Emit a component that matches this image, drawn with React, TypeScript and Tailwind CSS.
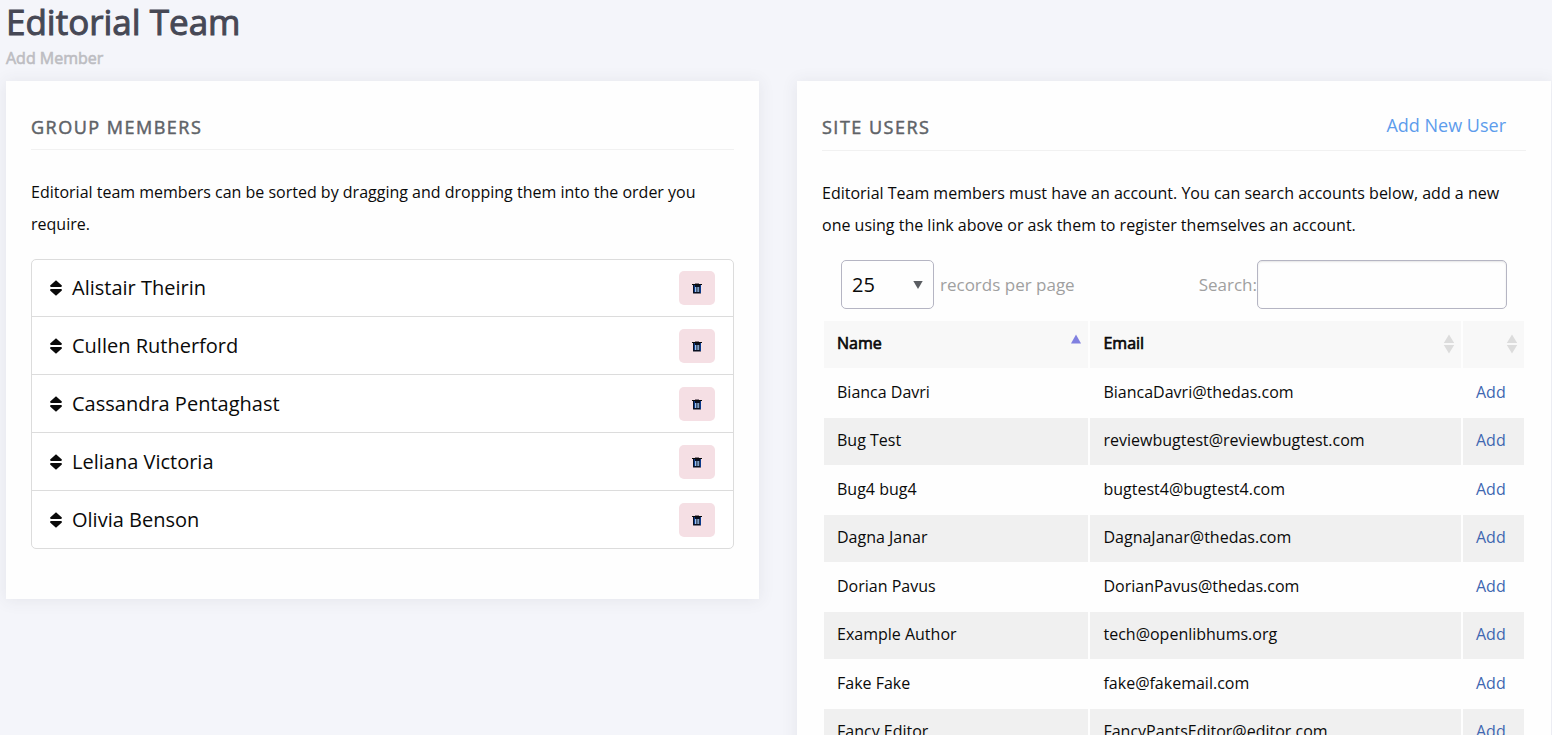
import React from "react";

const members = [
  "Alistair Theirin",
  "Cullen Rutherford",
  "Cassandra Pentaghast",
  "Leliana Victoria",
  "Olivia Benson",
];

const users = [
  { name: "Bianca Davri", email: "BiancaDavri@thedas.com" },
  { name: "Bug Test", email: "reviewbugtest@reviewbugtest.com" },
  { name: "Bug4 bug4", email: "bugtest4@bugtest4.com" },
  { name: "Dagna Janar", email: "DagnaJanar@thedas.com" },
  { name: "Dorian Pavus", email: "DorianPavus@thedas.com" },
  { name: "Example Author", email: "tech@openlibhums.org" },
  { name: "Fake Fake", email: "fake@fakemail.com" },
  { name: "Fancy Editor", email: "FancyPantsEditor@editor.com" },
];

function DragHandle() {
  return (
    <svg className="h-4 w-3 shrink-0" viewBox="0 0 12 16" aria-hidden="true">
      <path d="M6 0.3 L11.9 5.6 Q12 7 11 7 H1 Q0 7 0.1 5.6 Z" fill="#0a0a0a" />
      <path d="M6 15.7 L11.9 10.4 Q12 9 11 9 H1 Q0 9 0.1 10.4 Z" fill="#0a0a0a" />
    </svg>
  );
}

function TrashIcon() {
  return (
    <svg className="h-3 w-3" viewBox="0 0 12 12" aria-hidden="true">
      <path d="M4 2 V1 H8 V2 Z" fill="#8a7a84" />
      <path d="M1 2 H11 V3 H1 Z" fill="#0a0a0a" />
      <path d="M2 3 H10 V11 Q10 11.6 9.4 11.6 H2.6 Q2 11.6 2 11 Z" fill="#0a1020" />
      <path d="M3 3 H4 V10 H3 Z M9 3 H10 V11 H9 Z" fill="#0b3a8c" />
      <path d="M4 5 H5 V10 H4 Z M5.6 5 H6.6 V10 H5.6 Z M7.2 5 H8.2 V10 H7.2 Z" fill="#9cc0ea" />
    </svg>
  );
}

function SortBoth() {
  return (
    <svg className="h-5 w-3" viewBox="0 0 12 20" aria-hidden="true">
      <path d="M6 0.5 L11.2 9 H0.8 Z M6 19.5 L11.2 11 H0.8 Z" fill="#dcdcdc" />
    </svg>
  );
}

function SortUp() {
  return (
    <svg className="h-5 w-3" viewBox="0 0 12 20" aria-hidden="true">
      <path d="M6 0.5 L11 9.5 H1 Z" fill="#8080e0" />
    </svg>
  );
}

const panel = "bg-[#fefefe] px-[25px] pt-[31px] shadow-[0_1px_15px_1px_rgba(69,65,78,0.08)]";
const panelTitle =
  "text-lg leading-[30px] tracking-[1.5px] uppercase text-[#5f6368] [-webkit-text-stroke:0.5px_#5f6368]";
const headCell =
  "relative bg-[#f8f8f8] px-[13px] pt-0 pb-[3px] text-left font-normal [-webkit-text-stroke:0.7px_#0a0a0a]";
const bodyCell = "px-[13px] pt-0 pb-[3px]";

export default function App() {
  return (
    <div className="h-screen overflow-hidden bg-[#f4f5fa] pr-px pl-[6px] font-['Open_Sans',sans-serif] text-base text-[#0a0a0a]">
      <header className="h-[81px]">
        <h1 className="text-[35px] leading-[44px] text-[#464855] [-webkit-text-stroke:1px_#464855]">Editorial Team</h1>
        <p className="pt-[2px] leading-6 text-[#bdbdc2] [-webkit-text-stroke:0.6px_#bdbdc2]">Add Member</p>
      </header>

      <main className="grid grid-cols-[753fr_754fr] items-start gap-[38px]">
        <section className={`${panel} pb-[50px]`} aria-labelledby="group-title">
          <div className="border-b border-[#f1f1f1] pb-[7px]">
            <h2 id="group-title" className={panelTitle}>Group Members</h2>
          </div>
          <p className="pt-[26px] leading-8">
            Editorial team members can be sorted by dragging and dropping them into the order you require.
          </p>
          <ul className="mt-[19px] divide-y divide-[#dcdcdc] rounded-[5px] border border-[#dcdcdc] bg-white">
            {members.map((member) => (
              <li
                key={member}
                className="flex h-[58px] items-center gap-[10px] px-[18px] text-xl first:h-[57px] last:h-[57px]"
              >
                <DragHandle />
                <span className="flex-1">{member}</span>
                <button
                  type="button"
                  aria-label={`Remove ${member}`}
                  className="flex h-[34px] w-9 items-center justify-center rounded-[5px] bg-[#f5dfe4]"
                >
                  <TrashIcon />
                </button>
              </li>
            ))}
          </ul>
        </section>

        <section className={`${panel} pb-6`} aria-labelledby="users-title">
          <div className="flex items-start justify-between border-b border-[#f1f1f1] pr-5 pb-2">
            <h2 id="users-title" className={panelTitle}>Site Users</h2>
            <a href="#new-user" className="text-lg leading-[26px] text-[#5d9cec]">Add New User</a>
          </div>
          <p className="pt-[26px] leading-8">
            Editorial Team members must have an account. You can search accounts below, add a new one using the
            link above or ask them to register themselves an account.
          </p>
          <div className="mt-[19px] flex items-center justify-between px-[19px] text-[17px] text-[#a0a0a0]">
            <label className="flex items-center gap-[6px]">
              <span className="relative">
                <select
                  defaultValue="25"
                  className="h-[49px] w-[93px] appearance-none rounded-[5px] border border-[#b5b5c3] bg-[#fefefe] pl-[10px] text-xl text-[#0a0a0a]"
                >
                  <option>10</option>
                  <option>25</option>
                  <option>50</option>
                  <option>100</option>
                </select>
                <svg className="pointer-events-none absolute top-1/2 right-[11px] h-2 w-[10px] -translate-y-1/2" viewBox="0 0 10 8" aria-hidden="true">
                  <path d="M0.3 0 H9.7 L5 8 Z" fill="#5a5d62" />
                </svg>
              </span>
              records per page
            </label>
            <label className="flex items-center">
              Search:
              <input
                type="search"
                className="h-[49px] w-[250px] rounded-[5px] border border-[#b5b5c3] bg-[#fefefe] px-3 text-[#0a0a0a] shadow-[inset_0_1px_2px_rgba(10,10,10,0.1)]"
              />
            </label>
          </div>
          <table className="mt-[10px] w-full table-fixed border-separate border-spacing-[2px]">
            <colgroup>
              <col className="w-[38%]" />
              <col />
              <col className="w-[61px]" />
            </colgroup>
            <thead>
              <tr className="h-[47px]">
                <th scope="col" className={headCell} aria-sort="ascending">
                  Name
                  <span className="absolute top-[13px] right-[6px]"><SortUp /></span>
                </th>
                <th scope="col" className={headCell}>
                  Email
                  <span className="absolute top-[13px] right-[6px]"><SortBoth /></span>
                </th>
                <th scope="col" className={headCell} aria-label="Actions">
                  <span className="absolute top-[13px] right-[6px]"><SortBoth /></span>
                </th>
              </tr>
            </thead>
            <tbody>
              {users.map((user) => (
                <tr key={user.name} className="h-[46px] even:h-[47px] even:bg-[#f0f0f0]">
                  <td className={bodyCell}>{user.name}</td>
                  <td className={bodyCell}>{user.email}</td>
                  <td className={bodyCell}>
                    <a href="#add" className="text-[#3f67b1]">Add</a>
                  </td>
                </tr>
              ))}
            </tbody>
          </table>
        </section>
      </main>
    </div>
  );
}
